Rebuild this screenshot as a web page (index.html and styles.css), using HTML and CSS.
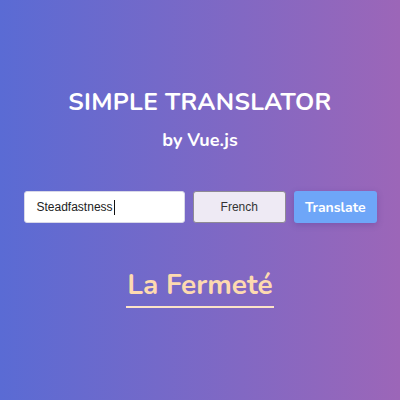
FILE: index.html
```html
<!DOCTYPE html>
<html>
<head>
<meta charset="utf-8">
<link rel="stylesheet" href="styles.css">
</head>
<body>
<div class="app">
  <h1 class="title">SIMPLE TRANSLATOR</h1>
  <h2 class="subtitle">by Vue.js</h2>
  <form class="form">
    <div class="input">Steadfastness<span class="caret"></span></div>
    <div class="select">French</div>
    <div class="btn">Translate</div>
  </form>
  <div class="result"><span class="result-text">La Fermeté</span></div>
</div>
</body>
</html>
```
FILE: styles.css
```css
html, body {
  margin: 0;
  padding: 0;
}
body {
  width: 400px;
  height: 400px;
  background: linear-gradient(to right, #5a6bd4, #9c66b8);
  font-family: "Nunito", "Lato", "Noto Sans", sans-serif;
  overflow: hidden;
}
.app {
  display: flex;
  flex-direction: column;
  align-items: center;
  padding-top: 88px;
}
.title {
  margin: 0;
  color: #fff;
  font-size: 24.5px;
  font-weight: 700;
  line-height: 28px;
  letter-spacing: 0.3px;
}
.subtitle {
  margin: 13px 0 0;
  color: #fff;
  font-size: 18px;
  font-weight: 700;
  line-height: 22px;
}
.form {
  display: flex;
  gap: 8px;
  margin-top: 40px;
  width: 353px;
}
.input {
  box-sizing: border-box;
  width: 162px;
  height: 32px;
  background: #fff;
  border: 1px solid #d8d8e8;
  border-radius: 3px;
  padding-left: 12px;
  display: flex;
  align-items: center;
  font-family: "Liberation Sans", Arial, sans-serif;
  font-size: 12px;
  color: #222;
}
.caret {
  display: inline-block;
  width: 1px;
  height: 15px;
  background: #111;
  margin-left: 1px;
}
.select {
  box-sizing: border-box;
  width: 94px;
  height: 32px;
  background: #eeeaf4;
  border: 1px solid #8e8a94;
  border-radius: 3px;
  display: flex;
  align-items: center;
  justify-content: center;
  font-family: "Liberation Sans", Arial, sans-serif;
  font-size: 12px;
  color: #333;
}
.btn {
  box-sizing: border-box;
  width: 83px;
  height: 32px;
  background: #6ea6f8;
  border-radius: 3px;
  display: flex;
  align-items: center;
  justify-content: center;
  color: #fff;
  font-size: 14px;
  font-weight: 700;
  box-shadow: 0 2px 6px rgba(60, 40, 120, 0.25);
}
.result {
  margin-top: 46px;
}
.result-text {
  display: inline-block;
  color: #fddab0;
  font-size: 28px;
  font-weight: 700;
  line-height: 32px;
  padding: 0 1px 5px;
  border-bottom: 2px solid #fce3c8;
}
```
